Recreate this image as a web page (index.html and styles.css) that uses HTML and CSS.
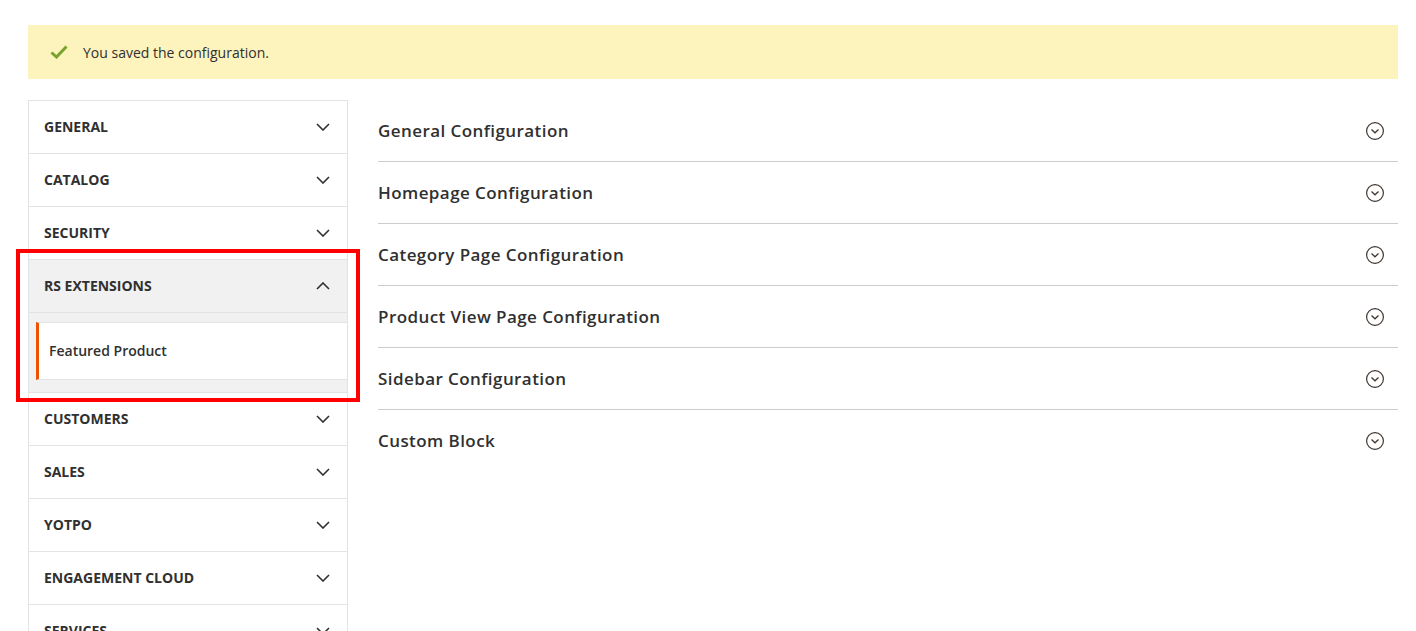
FILE: index.html
```html
<!DOCTYPE html>
<html>
<head>
<meta charset="utf-8">
<link rel="stylesheet" href="styles.css">
</head>
<body>
<div class="page">
  <div class="message">
    <svg class="check" width="18" height="14" viewBox="0 0 18 14"><path d="M1.5 7.5 L6.5 12 L16.5 1.5" fill="none" stroke="#79a22e" stroke-width="3"/></svg>
    <span>You saved the configuration.</span>
  </div>
  <div class="layout">
    <nav class="sidebar">
      <div class="tab"><span>General</span><svg class="chev" width="14" height="8" viewBox="0 0 14 8"><path d="M1 1 L7 7 L13 1" fill="none" stroke="#303030" stroke-width="1.6"/></svg></div>
      <div class="tab"><span>Catalog</span><svg class="chev" width="14" height="8" viewBox="0 0 14 8"><path d="M1 1 L7 7 L13 1" fill="none" stroke="#303030" stroke-width="1.6"/></svg></div>
      <div class="tab"><span>Security</span><svg class="chev" width="14" height="8" viewBox="0 0 14 8"><path d="M1 1 L7 7 L13 1" fill="none" stroke="#303030" stroke-width="1.6"/></svg></div>
      <div class="tab open"><span>RS Extensions</span><svg class="chev" width="14" height="8" viewBox="0 0 14 8"><path d="M1 7 L7 1 L13 7" fill="none" stroke="#303030" stroke-width="1.6"/></svg></div>
      <div class="submenu">
        <div class="subitem">Featured Product</div>
      </div>
      <div class="tab"><span>Customers</span><svg class="chev" width="14" height="8" viewBox="0 0 14 8"><path d="M1 1 L7 7 L13 1" fill="none" stroke="#303030" stroke-width="1.6"/></svg></div>
      <div class="tab"><span>Sales</span><svg class="chev" width="14" height="8" viewBox="0 0 14 8"><path d="M1 1 L7 7 L13 1" fill="none" stroke="#303030" stroke-width="1.6"/></svg></div>
      <div class="tab"><span>Yotpo</span><svg class="chev" width="14" height="8" viewBox="0 0 14 8"><path d="M1 1 L7 7 L13 1" fill="none" stroke="#303030" stroke-width="1.6"/></svg></div>
      <div class="tab"><span>Engagement Cloud</span><svg class="chev" width="14" height="8" viewBox="0 0 14 8"><path d="M1 1 L7 7 L13 1" fill="none" stroke="#303030" stroke-width="1.6"/></svg></div>
      <div class="tab"><span>Services</span><svg class="chev" width="14" height="8" viewBox="0 0 14 8"><path d="M1 1 L7 7 L13 1" fill="none" stroke="#303030" stroke-width="1.6"/></svg></div>
      <div class="highlight"></div>
    </nav>
    <main class="sections">
      <div class="section"><span>General Configuration</span><svg class="circ" width="20" height="20" viewBox="0 0 20 20"><circle cx="10" cy="10" r="8.4" fill="none" stroke="#41362f" stroke-width="1.2"/><path d="M6.5 8.5 L10 11.8 L13.5 8.5" fill="none" stroke="#41362f" stroke-width="1.3"/></svg></div>
      <div class="section"><span>Homepage Configuration</span><svg class="circ" width="20" height="20" viewBox="0 0 20 20"><circle cx="10" cy="10" r="8.4" fill="none" stroke="#41362f" stroke-width="1.2"/><path d="M6.5 8.5 L10 11.8 L13.5 8.5" fill="none" stroke="#41362f" stroke-width="1.3"/></svg></div>
      <div class="section"><span>Category Page Configuration</span><svg class="circ" width="20" height="20" viewBox="0 0 20 20"><circle cx="10" cy="10" r="8.4" fill="none" stroke="#41362f" stroke-width="1.2"/><path d="M6.5 8.5 L10 11.8 L13.5 8.5" fill="none" stroke="#41362f" stroke-width="1.3"/></svg></div>
      <div class="section"><span>Product View Page Configuration</span><svg class="circ" width="20" height="20" viewBox="0 0 20 20"><circle cx="10" cy="10" r="8.4" fill="none" stroke="#41362f" stroke-width="1.2"/><path d="M6.5 8.5 L10 11.8 L13.5 8.5" fill="none" stroke="#41362f" stroke-width="1.3"/></svg></div>
      <div class="section"><span>Sidebar Configuration</span><svg class="circ" width="20" height="20" viewBox="0 0 20 20"><circle cx="10" cy="10" r="8.4" fill="none" stroke="#41362f" stroke-width="1.2"/><path d="M6.5 8.5 L10 11.8 L13.5 8.5" fill="none" stroke="#41362f" stroke-width="1.3"/></svg></div>
      <div class="section last"><span>Custom Block</span><svg class="circ" width="20" height="20" viewBox="0 0 20 20"><circle cx="10" cy="10" r="8.4" fill="none" stroke="#41362f" stroke-width="1.2"/><path d="M6.5 8.5 L10 11.8 L13.5 8.5" fill="none" stroke="#41362f" stroke-width="1.3"/></svg></div>
    </main>
  </div>
</div>
</body>
</html>
```

FILE: styles.css
```css
html, body {
  margin: 0;
  padding: 0;
  background: #fff;
  font-family: "Open Sans", "Noto Sans", sans-serif;
  color: #303030;
  overflow: hidden;
}
.page {
  padding: 25px 18px 0 28px;
}
.message {
  height: 54px;
  background: #fdf3bd;
  display: flex;
  align-items: center;
  padding-left: 22px;
  font-size: 14px;
  color: #303030;
}
.message .check {
  margin-right: 15px;
}
.layout {
  display: flex;
  gap: 30px;
  margin-top: 21px;
}
.sidebar {
  position: relative;
  width: 318px;
  flex: none;
  border: 1px solid #e3e3e3;
  border-bottom: none;
}
.tab {
  height: 52px;
  border-bottom: 1px solid #e3e3e3;
  display: flex;
  align-items: center;
  justify-content: space-between;
  padding: 0 17px 0 15px;
  font-size: 14px;
  font-weight: 700;
  text-transform: uppercase;
}
.tab span {
  margin-top: -2px;
}
.tab.open {
  background: #f1f1f1;
}
.submenu {
  background: #f1f1f1;
  padding: 9px 0 12px 7px;
  border-bottom: 1px solid #e3e3e3;
}
.subitem {
  background: #fff;
  height: 56px;
  border-left: 3px solid #eb5202;
  border-top: 1px solid #e3e3e3;
  border-bottom: 1px solid #e3e3e3;
  display: flex;
  align-items: center;
  padding-left: 10px;
  font-size: 14px;
  font-weight: 600;
}
.subitem {
  padding-bottom: 2px;
  box-sizing: border-box;
  height: 58px;
}
.highlight {
  position: absolute;
  left: -13px;
  top: 148px;
  width: 336px;
  height: 145px;
  border: 4px solid #ff0000;
}
.sections {
  flex: 1;
}
.section {
  height: 61px;
  border-bottom: 1px solid #cccccc;
  display: flex;
  align-items: center;
  justify-content: space-between;
  padding-right: 13px;
  font-size: 17px;
  font-weight: 600;
  letter-spacing: 0.025em;
  color: #303030;
}
.section.last {
  border-bottom: none;
}
.section span {
  margin-top: -1px;
}
```
